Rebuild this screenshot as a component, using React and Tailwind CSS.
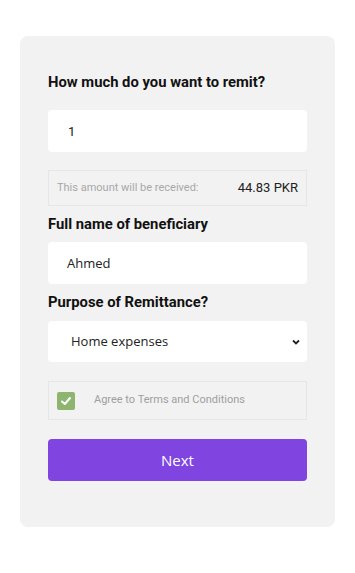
import { useState } from "react";

export default function App() {
  const [amount, setAmount] = useState("1");
  const [name, setName] = useState("Ahmed");
  const [agree, setAgree] = useState(true);

  return (
    <div className="min-h-screen bg-white pt-[36px] pl-[20px]" style={{ fontFamily: "Roboto, sans-serif" }}>
      <div className="w-[315px] rounded-lg bg-[#f2f2f2] px-[28px] pt-[36px] pb-[46px]">
        <h2 className="text-[14.8px] font-bold leading-5 text-[#111]">How much do you want to remit?</h2>
        <input
          value={amount}
          onChange={(e) => setAmount(e.target.value)}
          className="mt-[18px] block h-[42px] w-full rounded bg-white px-[20px] text-[13px] text-[#222] outline-none"
        />
        <div className="mt-[18px] flex h-[36px] items-center justify-between border border-[#e6e6e6] px-[8px]">
          <span className="text-[11px] text-[#a8a8a8]">This amount will be received:</span>
          <span className="text-[13px] text-[#222]">44.83 PKR</span>
        </div>

        <h2 className="mt-[8px] text-[14.8px] font-bold leading-5 text-[#111]">Full name of beneficiary</h2>
        <input
          value={name}
          onChange={(e) => setName(e.target.value)}
          className="mt-[8px] block h-[42px] w-full rounded bg-white px-[19px] text-[13px] text-[#222] outline-none"
          style={{ fontFamily: "'Open Sans', sans-serif" }}
        />

        <h2 className="mt-[8px] text-[14.8px] font-bold leading-5 text-[#111]">Purpose of Remittance?</h2>
        <div
          className="mt-[9px] flex h-[41px] w-full items-center justify-between rounded bg-white pl-[23px] pr-[6px] text-[13px] text-[#222]"
          style={{ fontFamily: "'Open Sans', sans-serif" }}
        >
          <span>Home expenses</span>
          <svg width="10" height="10" viewBox="0 0 10 10" fill="none" stroke="#222" strokeWidth="1.8">
            <path d="M2 3.5 L5 6.5 L8 3.5" />
          </svg>
        </div>

        <label className="mt-[19px] flex h-[39px] cursor-pointer items-center border border-[#e6e6e6] pl-[8px]">
          <span
            onClick={() => setAgree(!agree)}
            className={agree ? "flex h-[18px] w-[18px] items-center justify-center rounded-[2px] bg-[#8db56f]" : "flex h-[18px] w-[18px] items-center justify-center rounded-[2px] border border-[#ccc] bg-white"}
          >
            {agree && (
              <svg width="12" height="12" viewBox="0 0 12 12" fill="none" stroke="#fff" strokeWidth="2" strokeLinecap="round" strokeLinejoin="round">
                <path d="M2 6.5 L4.8 9 L10 3" />
              </svg>
            )}
          </span>
          <span className="ml-[19px] text-[11px] text-[#a0a0a0]">Agree to Terms and Conditions</span>
        </label>

        <button
          className="mt-[19px] block h-[42px] w-full rounded bg-[#8044e0] text-[15px] text-white"
          style={{ fontFamily: "'Open Sans', sans-serif" }}
        >
          Next
        </button>
      </div>
    </div>
  );
}
